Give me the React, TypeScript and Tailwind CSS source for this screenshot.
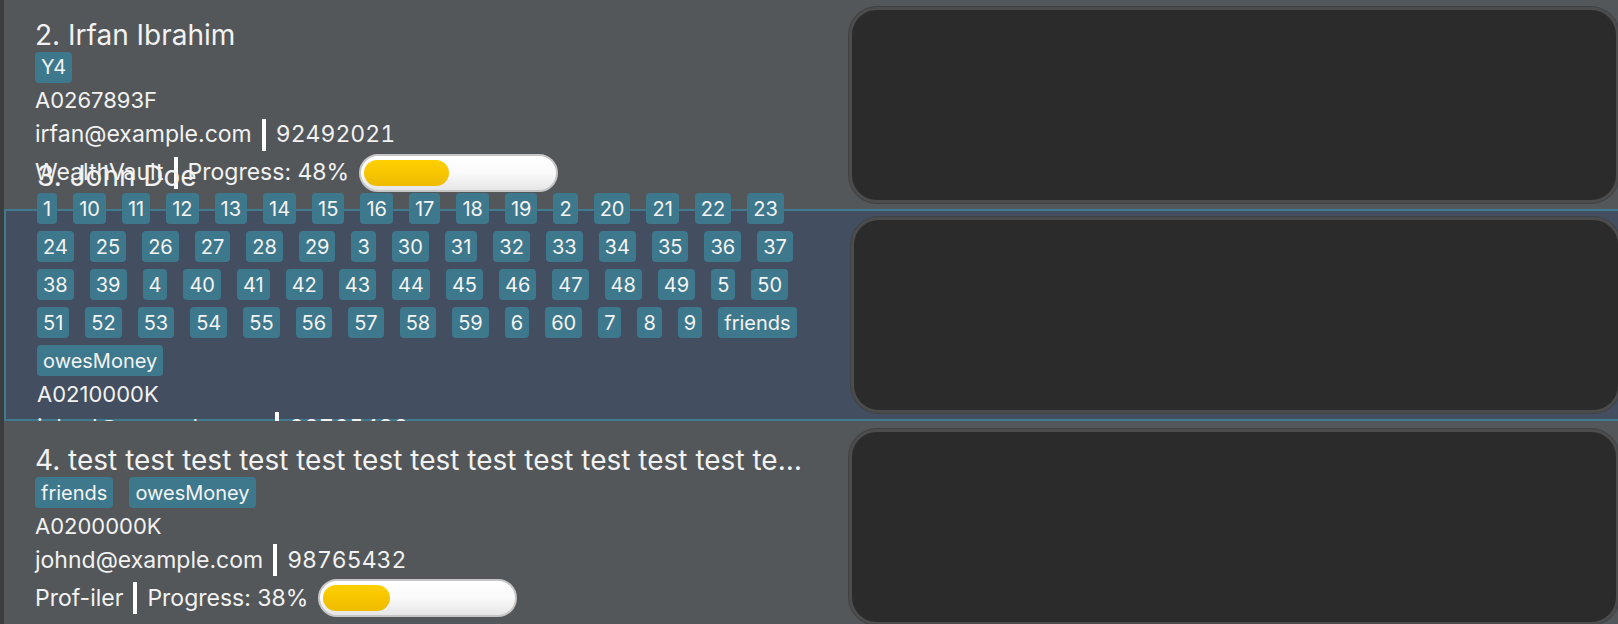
import React from 'react';

type Person = {
  index: number;
  name: string;
  tags: string[];
  studentId: string;
  email: string;
  phone: string;
  course: string;
  progress: number;
};

const manyTags = [
  ...Array.from({ length: 60 }, (_, i) => String(i + 1)),
  'friends',
  'owesMoney',
].sort();

const people: Person[] = [
  {
    index: 2,
    name: 'Irfan Ibrahim',
    tags: ['Y4'],
    studentId: 'A0267893F',
    email: 'irfan@example.com',
    phone: '92492021',
    course: 'WealthVault',
    progress: 48,
  },
  {
    index: 3,
    name: 'John Doe',
    tags: manyTags,
    studentId: 'A0210000K',
    email: 'johnd@example.com',
    phone: '98765432',
    course: 'Prof-iler',
    progress: 38,
  },
  {
    index: 4,
    name: Array.from({ length: 20 }, () => 'test').join(' '),
    tags: ['friends', 'owesMoney'],
    studentId: 'A0200000K',
    email: 'johnd@example.com',
    phone: '98765432',
    course: 'Prof-iler',
    progress: 38,
  },
];

const Divider = () => <div className="mx-[10px] h-[32px] w-[4px] shrink-0 bg-white" />;

const ProgressBar = ({ value }: { value: number }) => (
  <div className="ml-[10px] h-[38px] w-[199px] shrink-0 rounded-full border-2 border-[#c6c6c6] bg-gradient-to-b from-[#ffffff] via-[#fafafa] to-[#e6e6e6] px-[3px] py-[4px]">
    <div
      className="h-full rounded-full bg-gradient-to-b from-[#ffd000] to-[#eebb00]"
      style={{ width: `${value * 0.93}%` }}
    />
  </div>
);

const PersonCard = ({
  person,
  selected,
  className,
  columnClass,
}: {
  person: Person;
  selected?: boolean;
  className: string;
  columnClass: string;
}) => (
  <div
    className={`relative flex w-[1640px] shrink-0 items-center ${className} ${
      selected ? 'border-2 border-r-0 border-[#3f7a8e] bg-[#434e60]' : 'bg-[#53575a]'
    }`}
  >
    <div className={`flex h-full w-[804px] shrink-0 flex-col justify-center gap-[2px] pl-[31px] ${columnClass}`}>
      {/* name line, cut with an ellipsis when too long */}
      <div className="flex h-[30px] shrink-0 items-center">
        <span className="block w-full truncate text-[28px] leading-[36px]">
          {person.index}. {person.name}
        </span>
      </div>
      <div className="flex shrink-0 flex-wrap gap-x-[16px] gap-y-[7px]">
        {person.tags.map((tag) => (
          <span
            key={tag}
            className="flex h-[31px] items-center rounded-[4px] bg-[#3e788c] px-[6px] text-[20px] leading-none text-[#f4f4f4]"
          >
            {tag}
          </span>
        ))}
      </div>
      <div className="flex h-[31px] shrink-0 items-center text-[22px] leading-none">{person.studentId}</div>
      <div className="flex h-[34px] shrink-0 items-center text-[23px] leading-none">
        <span>{person.email}</span>
        <Divider />
        <span className="tabular-nums">{person.phone}</span>
      </div>
      <div className="flex h-[38px] shrink-0 items-center text-[23px] leading-none">
        <span>{person.course}</span>
        <Divider />
        <span>Progress: {person.progress}%</span>
        <ProgressBar value={person.progress} />
      </div>
    </div>
    <div className="ml-[41px] h-[196px] w-[770px] shrink-0 rounded-[28px] border-[3px] border-[#4c4c4c] bg-[#2b2b2b] shadow-[0_0_0_1px_#3f4244]" />
  </div>
);

export default function App() {
  return (
    <div className="h-[624px] w-[1618px] overflow-hidden bg-[#3c3d3e] pl-[4px] font-['Inter',sans-serif] text-[#f2f2f2]">
      <div className="flex flex-col">
        <PersonCard person={people[0]} className="h-[209px]" columnClass="pt-[2px]" />
        {/* selected cell: its content spills upward over the previous cell, the bottom is cut */}
        <PersonCard
          person={people[1]}
          selected
          className="h-[212px] [clip-path:inset(-120px_0_0_0)]"
          columnClass="pt-[16px]"
        />
        <PersonCard person={people[2]} className="h-[212px]" columnClass="pt-[8px]" />
      </div>
    </div>
  );
}
